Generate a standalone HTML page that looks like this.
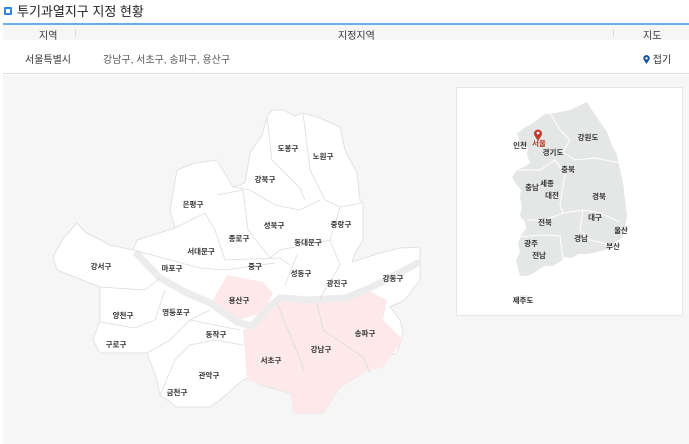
<!DOCTYPE html>
<html><head><meta charset="utf-8"><style>
*{margin:0;padding:0;box-sizing:border-box}
body{width:689px;height:444px;background:#fff;font-family:"Liberation Sans","Noto Sans CJK KR",sans-serif;color:#333;position:relative;overflow:hidden}
.t{position:absolute;left:4px;top:1px;font-size:13px;color:#222;display:flex;align-items:center}
.t i{display:inline-block;width:8px;height:8px;border:2px solid #2b86e0;border-radius:1px;margin-right:5px}
.hd{position:absolute;left:3px;right:0;top:23px;height:17px;border-top:2px solid #6aaee8;background:#f6f6f6;font-size:10px;color:#333}
.hd span{position:absolute;top:2px}
.row{position:absolute;left:3px;right:0;top:40px;height:34px;border-bottom:1px solid #ddd;font-size:10px}
.row span{position:absolute;top:11px}
.area{position:absolute;left:3px;right:0;top:75px;bottom:0;background:#f6f6f6}
svg text{font-family:"Liberation Sans","Noto Sans CJK KR",sans-serif;font-size:7.5px;font-weight:bold;fill:#333;text-anchor:middle}
</style></head><body>
<div class="t"><i></i>투기과열지구 지정 현황</div>
<div class="hd"><span style="left:36px">지역</span><span style="left:335px">지정지역</span><span style="left:640px">지도</span>
<b style="position:absolute;left:72px;top:4px;width:1px;height:8px;background:#ddd"></b><b style="position:absolute;left:610px;top:4px;width:1px;height:8px;background:#ddd"></b></div>
<div class="row"><span style="left:22px;color:#333">서울특별시</span><span style="left:100px;color:#555">강남구, 서초구, 송파구, 용산구</span><span style="left:640px;color:#333"><svg width="7" height="9" viewBox="0 0 7 9" style="vertical-align:-1px"><path d="M3.5 9 L0.6 4.6 A3.2 3.2 0 1 1 6.4 4.6 Z" fill="#1b4fa0"/><circle cx="3.5" cy="3.3" r="1.2" fill="#fff"/></svg> 접기</span></div>
<div class="area"></div>
<svg width="689" height="444" style="position:absolute;left:0;top:0">
<polygon fill="#fff" stroke="#e2e2e2" stroke-width="1" points="53,257 62,240 77,223 85,232 110,245 133,250 137,240 175,228 170,210 177,170 195,163 217,160 233,187 245,183 250,153 262,135 267,117 272,110 283,110 295,116 303,113 320,118 340,127 345,150 357,173 360,200 363,203 363,240 355,253 352,262 380,253 400,248 420,247 420,280 405,300 390,307 400,320 403,333 397,353 375,360 363,373 340,387 323,413 297,413 290,393 260,385 250,377 243,380 220,400 210,407 177,407 160,395 157,380 147,353 100,353 93,340 100,320 100,300 100,287 57,270"/>
<polygon fill="#fde9e9" points="243,330 247,380 290,393 293,413 323,413 340,387 363,373 383,367 403,340 383,320 387,300 367,290 343,297 313,303 277,300 267,313 250,327"/>
<polygon fill="#fde9e9" points="213,300 227,275 263,282 273,293 263,313 237,320 213,307"/>
<polyline fill="none" stroke="#ececec" stroke-width="7" points="135,252 160,278 185,292 210,303 237,322 252,326 270,306 280,298 310,300 345,298 370,288 397,274 420,262"/>
<g fill="none" stroke="#dcdcdc" stroke-width="0.8">
<polyline points="277,303 303,367 303,373"/><polyline points="317,303 323,330 363,357 370,373"/>
<polyline points="267,117 272,160 300,188 305,200"/><polyline points="303,113 310,170 325,200 340,207 363,203"/>
<polyline points="233,187 250,190 275,205 300,210 320,200"/><polyline points="217,195 243,190 248,230 270,258 280,250 330,240 340,207"/>
<polyline points="175,228 205,213 215,230 225,260"/><polyline points="133,250 200,268 225,270 275,263"/><polyline points="225,260 280,258 290,265"/>
<polyline points="330,240 340,265 320,298"/><polyline points="297,255 285,285"/>
<polyline points="100,287 145,290 160,278"/><polyline points="100,322 135,328 155,320 165,290"/><polyline points="147,353 170,340 190,320 210,310"/>
<polyline points="160,395 175,360 190,345 215,340 243,345"/><polyline points="190,320 240,330"/>
</g>
<text x="288" y="151">도봉구</text><text x="323" y="159">노원구</text><text x="265" y="182">강북구</text><text x="193" y="207">은평구</text><text x="274" y="228">성북구</text><text x="239" y="241">종로구</text><text x="341" y="227">중랑구</text><text x="308" y="245">동대문구</text><text x="201" y="254">서대문구</text><text x="101" y="269">강서구</text><text x="172" y="271">마포구</text><text x="255" y="269">중구</text><text x="301" y="276">성동구</text><text x="337" y="286">광진구</text><text x="393" y="281">강동구</text><text x="239" y="303">용산구</text><text x="123" y="318">양천구</text><text x="176" y="315">영등포구</text><text x="216" y="337">동작구</text><text x="116" y="347">구로구</text><text x="365" y="336">송파구</text><text x="321" y="352">강남구</text><text x="271" y="363">서초구</text><text x="209" y="378">관악구</text><text x="177" y="395">금천구</text>
<rect x="456.5" y="87.5" width="226" height="228" fill="#fff" stroke="#e6e6e6"/>
<polygon fill="#e5e6e6" points="517,134 524,128 530,125 545,114 555,113 570,110 587,102 592,110 600,122 607,132 612,145 617,155 620,170 623,182 625,200 627,215 625,228 622,238 615,242 612,248 605,250 597,252 588,254 578,254 572,258 565,257 560,262 552,266 545,266 538,270 532,274 526,276 520,276 518,268 516,260 520,252 518,244 521,235 526,229 525,222 520,216 522,206 520,198 521,190 516,184 512,177 517,170 524,167 530,163 527,155 528,147 520,142"/>
<ellipse cx="523" cy="299" rx="9" ry="4" fill="#eee"/>
<g fill="none" stroke="#fff" stroke-width="1"><polyline points="550,113 560,130 570,140 563,152 575,160 595,158 620,163"/><polyline points="517,170 540,170 555,160 565,175 560,205 563,213"/><polyline points="527,220 545,220 563,213 583,210 600,213 620,222"/><polyline points="520,237 540,235 560,236 563,260"/><polyline points="583,210 580,230 590,240 610,245"/></g>
<text x="520" y="148">인천</text><text x="539" y="146" style="fill:#c0392b">서울</text><text x="553" y="155">경기도</text><text x="588" y="140">강원도</text><text x="568" y="172">충북</text><text x="532" y="190">충남</text><text x="547" y="186">세종</text><text x="552" y="198">대전</text><text x="599" y="199">경북</text><text x="595" y="220">대구</text><text x="545" y="225">전북</text><text x="621" y="233">울산</text><text x="531" y="246">광주</text><text x="581" y="241">경남</text><text x="613" y="249">부산</text><text x="539" y="258">전남</text><text x="523" y="303">제주도</text>
<path d="M538 141 L534.5 135.5 A4 4 0 1 1 541.5 135.5 Z" fill="#c0392b"/><circle cx="538" cy="133" r="1.4" fill="#fff"/>
</svg>
</body></html>
